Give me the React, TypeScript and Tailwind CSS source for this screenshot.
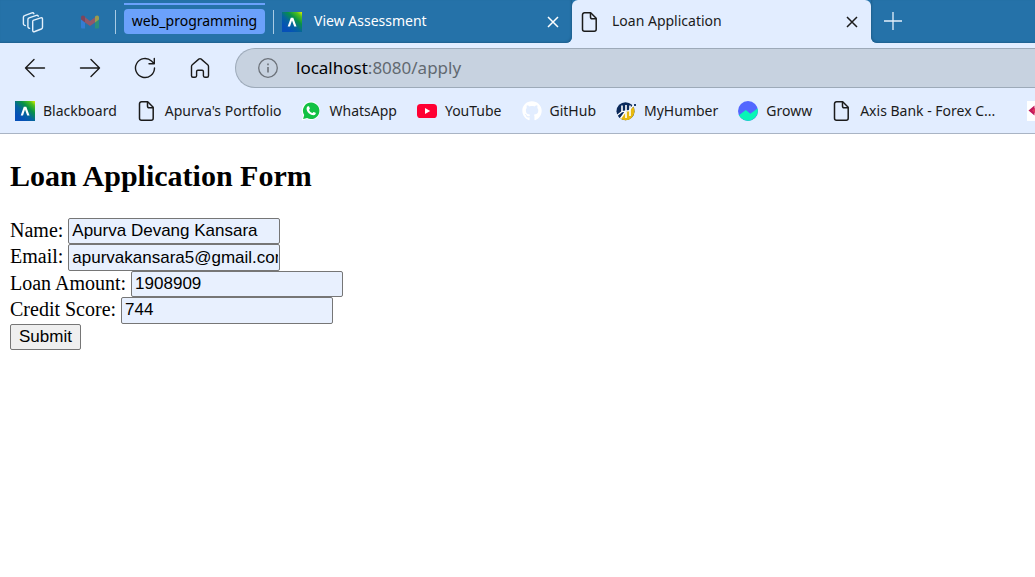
import React from 'react';
import { FaGithub } from 'react-icons/fa';

function PageIcon() {
  return (
    <svg viewBox="0 0 20 20" className="size-5 shrink-0" fill="none" stroke="#1b1b1b" strokeWidth="1.5" aria-hidden="true">
      <path d="M4.500 .8h6.200L16.200 6.300v10.900a2 2 0 0 1-2 2H4.500a2 2 0 0 1-2-2V2.800a2 2 0 0 1 2-2Z" strokeLinejoin="round" />
      <path d="M10.500 1v4.300a1.500 1.500 0 0 0 1.500 1.500h4" />
    </svg>
  );
}

function BlackboardIcon({ id }: { id: string }) {
  return (
    <svg viewBox="0 0 20 20" className="size-5 shrink-0" aria-hidden="true">
      <defs>
        <linearGradient id={id} x1="1" y1="0" x2="0.25" y2="0.85">
          <stop offset="0" stopColor="#e6f000" />
          <stop offset="0.18" stopColor="#4fc01c" />
          <stop offset="0.42" stopColor="#089147" />
          <stop offset="0.7" stopColor="#0563a0" />
          <stop offset="1" stopColor="#0650b8" />
        </linearGradient>
      </defs>
      <path d="M0 0h20v20H0z" fill={`url(#${id})`} />
      <path d="M8.8 5.7h2.500l3.200 8.700h-2.300L10 8.400l-2 6H5.700Z" fill="#fff" />
    </svg>
  );
}

function WhatsAppIcon() {
  return (
    <svg viewBox="0 0 20 20" className="size-5 shrink-0" aria-hidden="true">
      <path d="M10.2.4a9.3 9.3 0 1 1-4.4 17.7L.7 19.4l1.4-4.9A9.3 9.3 0 0 1 10.2.4Z" fill="#fff" />
      <path d="M10.2 1.6a8.2 8.2 0 1 1-4.1 15.300l-4 1.100 1.100-3.900a8.200 8.200 0 0 1 7-12.500Z" fill="#12c143" />
      <path d="M7 5.3c.4-.2.9-.1 1.1.3l.8 1.9c.1.4-.7 1.1-.8 1.4.6 1.5 1.7 2.500 3.200 3.100.4 0 .9-1 1.300-1.100l2 .9c.5.3-.1 1.700-.6 2-2.600 1.500-8.800-2-8.400-6.400.1-.9.700-1.800 1.400-2.100Z" fill="#fff" />
    </svg>
  );
}

function YouTubeIcon() {
  return (
    <svg viewBox="0 0 20 20" className="size-5 shrink-0" aria-hidden="true">
      <rect y="3" width="20" height="14" rx="3.6" fill="#ff0033" />
      <path d="m8 7 5.200 3L8 13Z" fill="#fff" />
    </svg>
  );
}

function HumberIcon() {
  return (
    <svg viewBox="0 0 20 20" className="size-5 shrink-0" aria-hidden="true">
      <circle cx="9.500" cy="10.200" r="9" fill="#0b2a5c" />
      <path d="M17.200 5.500A9 9 0 0 1 4 17.300L8.500 11.500 14 9Z" fill="#e8b90d" />
      <path d="M6 4.500v6.500M10 4v6M14 4.500V15M10 10.500V17" stroke="#fff" strokeWidth="1.600" fill="none" />
      <path d="M1 14.500 6 10.500l7-.800 4.500-5.500M4.500 17.500l5-7" stroke="#fff" strokeWidth="1.300" fill="none" />
      <path d="M18 3h2v2h-2z" fill="#173a6c" />
    </svg>
  );
}

function GrowwIcon() {
  return (
    <svg viewBox="0 0 20 20" className="size-5 shrink-0" aria-hidden="true">
      <circle cx="10" cy="10" r="10" fill="#5367ff" />
      <path d="M.9 14.200 7.800 8.900l4.500 3.800 7.300-5.200A10 10 0 0 1 .9 14.200Z" fill="#08f6b6" />
    </svg>
  );
}

function AxisIcon() {
  return (
    <svg viewBox="0 0 20 20" className="size-5 shrink-0" aria-hidden="true">
      <path d="M0 0h20v20H0z" fill="#fff" />
      <path d="m1.500 9.500 6-5v10Z" fill="#c2185b" />
      <path d="m5 9.500 6-6v12Z" fill="#e0335f" />
    </svg>
  );
}

function WorkspacesIcon() {
  return (
    <svg viewBox="0 0 22 22" className="size-[22px]" fill="none" stroke="#e4f0fb" strokeWidth="1.400" strokeLinejoin="round" strokeLinecap="round" aria-hidden="true">
      <path d="m11.200 9.300 7.500-2.500q1.800-.5 1.800 1.200v8.300q0 1.200-1.200 1.700l-6.500 2.500q-2.100.7-2.100-1.200V10.500q0-1 .5-1.200Z" />
      <path d="m7.600 17.300-.9-.300q-.8-.4-.8-1.400V8.600q0-1.300 1.200-1.700l7.200-2.500q1.600-.5 2 .8" />
      <path d="m3.300 14.600-1-.4q-.9-.4-.9-1.500V6.300q0-1.300 1.200-1.700l7.300-2.700q1.500-.4 2 .8" />
    </svg>
  );
}

function GmailIcon() {
  return (
    <svg viewBox="0 0 20 20" className="size-5 opacity-55" aria-hidden="true">
      <path d="M1 5v10.500a1 1 0 0 0 1 1h3V8Z" fill="#4285f4" />
      <path d="M19 5v10.500a1 1 0 0 1-1 1h-3V8Z" fill="#34a853" />
      <path d="M5 5.200 10 9l5-3.800v5.200L10 14l-5-3.600Z" fill="#ea4335" />
      <path d="M1 5.500C1 3.500 3 2.800 5 4.500v5.900L1 7.500Z" fill="#c5221f" />
      <path d="M19 5.500c0-2-2-2.700-4-1v5.900l4-2.900Z" fill="#fbbc04" />
    </svg>
  );
}

function CloseIcon() {
  return (
    <svg viewBox="0 0 12 12" className="size-3" stroke="currentColor" strokeWidth="1.500" aria-hidden="true">
      <path d="m1 1 10 10M11 1 1 11" />
    </svg>
  );
}

const stroke = {
  fill: 'none',
  stroke: '#1b1b1b',
  strokeWidth: 1.4,
  strokeLinecap: 'round' as const,
  strokeLinejoin: 'round' as const,
};

function NavButton({ label, children }: { label: string; children: React.ReactNode }) {
  return (
    <button type="button" aria-label={label} className="flex size-[22px] items-center justify-center">
      <svg viewBox="0 0 22 22" className="size-[22px]" {...stroke}>{children}</svg>
    </button>
  );
}

const bookmarks = [
  { name: 'Blackboard', icon: <BlackboardIcon id="bb-bookmark" /> },
  { name: "Apurva's Portfolio", icon: <PageIcon /> },
  { name: 'WhatsApp', icon: <WhatsAppIcon /> },
  { name: 'YouTube', icon: <YouTubeIcon /> },
  { name: 'GitHub', icon: <FaGithub className="size-5 shrink-0 text-white" /> },
  { name: 'MyHumber', icon: <HumberIcon /> },
  { name: 'Groww', icon: <GrowwIcon /> },
  { name: 'Axis Bank - Forex C...', icon: <PageIcon /> },
];

const fields = [
  { id: 'name', label: 'Name:', value: 'Apurva Devang Kansara' },
  { id: 'email', label: 'Email:', value: 'apurvakansara5@gmail.com' },
  { id: 'amount', label: 'Loan Amount:', value: '1908909' },
  { id: 'score', label: 'Credit Score:', value: '744' },
];

function TabStrip() {
  return (
    <div className="flex h-[43px] bg-[#e2edff] text-sm">
      <div className="flex w-[572px] shrink-0 items-center rounded-br-md bg-[#2572a9] pl-[22px] shadow-[inset_-1px_-1px_2px_#1f608f]">
        <button type="button" aria-label="Workspaces"><WorkspacesIcon /></button>
        <button type="button" aria-label="Gmail" className="ml-9"><GmailIcon /></button>
        <span className="ml-[15px] h-6 w-px bg-[#a9cbe4]" />
        <div className="ml-2 flex h-[43px] w-[141px] flex-col pt-[3px]">
          <span className="h-0.5 bg-[#6ba1fb]" />
          <button type="button" className="mt-1 flex h-[25px] items-start justify-center rounded bg-[#6ba1fb] leading-[23px] text-black">web_programming</button>
        </div>
        <span className="ml-2 h-6 w-px bg-[#a9cbe4]" />
        <div className="ml-2 flex flex-1 items-center gap-3 pr-[13px] text-white">
          <BlackboardIcon id="bb-tab" />
          <span className="flex-1 pb-0.5">View Assessment</span>
          <button type="button" aria-label="Close View Assessment"><CloseIcon /></button>
        </div>
      </div>
      <div className="w-[299px] shrink-0 bg-[linear-gradient(#2572a9_50%,#e2edff_50%)]">
        <div className="flex h-full items-center gap-3 rounded-t-md bg-[#e2edff] pr-[13px] pl-2 text-[#1b1b1b]">
          <PageIcon />
          <span className="flex-1 pb-0.5">Loan Application</span>
          <button type="button" aria-label="Close Loan Application"><CloseIcon /></button>
        </div>
      </div>
      <div className="flex flex-1 items-center rounded-bl-md bg-[#2572a9] pb-0.5 pl-[13px] shadow-[inset_1px_-1px_2px_#1f608f]">
        <button type="button" aria-label="New tab">
          <svg viewBox="0 0 18 18" className="size-[18px]" stroke="#e4f0fb" strokeWidth="1.300"><path d="M9 0v18M0 9h18" /></svg>
        </button>
      </div>
    </div>
  );
}

function Toolbar() {
  return (
    <div className="flex items-center bg-[#e2edff] pt-[5px] pl-6">
      <div className="flex shrink-0 gap-[33px]">
        <NavButton label="Back"><path d="M10 2.500 1.500 11l8.500 8.500M1.500 11H20.500" /></NavButton>
        <NavButton label="Forward"><path d="m12 2.500 8.500 8.500-8.500 8.500M20.500 11H1.500" /></NavButton>
        <NavButton label="Refresh"><path d="M20.500 11A9.500 9.500 0 1 1 17.500 4.100L20 6.500M20.300 1.500v5.300h-5.300" /></NavButton>
        <NavButton label="Home"><path d="M2.500 9.500q0-1 .8-1.700l6.500-5.700q1.200-1 2.400 0l6.500 5.700q.8.700.8 1.700v9.200q0 1.500-1.500 1.500h-2.200q-1.400 0-1.400-1.400v-4.300q0-1.300-1.300-1.300H8.900q-1.300 0-1.300 1.300v4.300q0 1.400-1.400 1.400H4q-1.500 0-1.500-1.500Z" /></NavButton>
      </div>
      <div className="ml-6 flex h-10 min-w-0 flex-1 items-center gap-[18px] rounded-l-full border border-r-0 border-[#9daab9] bg-[#c7d2e0] pl-[22px]">
        <svg viewBox="0 0 20 20" className="size-5 shrink-0" fill="none" stroke="#6c727a" strokeWidth="1.300" aria-hidden="true">
          <circle cx="10" cy="10" r="9.300" />
          <path d="M10 9v5.500M10 5.500v1.700" strokeWidth="1.600" />
        </svg>
        <a href="#apply" className="text-[17px] leading-6 text-[#626970]"><span className="text-black">localhost</span>:8080/apply</a>
      </div>
    </div>
  );
}

export default function App() {
  return (
    <div className="min-h-screen overflow-hidden bg-white">
      <header className="font-['Noto_Sans',sans-serif]">
        <TabStrip />
        <Toolbar />
        <nav aria-label="Bookmarks" className="flex h-[46px] gap-5 overflow-hidden border-b border-[#a9b4c4] bg-[#e2edff] pl-[15px] text-sm text-[#1b1b1b]">
          {bookmarks.map((b) => (
            <a key={b.name} href="#bookmark" className="flex shrink-0 items-center gap-2 whitespace-nowrap">
              {b.icon}
              <span>{b.name}</span>
            </a>
          ))}
          <a href="#bookmark" aria-label="Axis Bank" className="ml-3 flex shrink-0 items-center"><AxisIcon /></a>
        </nav>
      </header>
      <main className="px-2.5 pt-[25px] font-['Liberation_Serif',serif] text-black">
        <h1 className="text-[30px] leading-[34px] font-bold">Loan Application Form</h1>
        <form className="mt-[25px] grid h-[132px] grid-rows-5 text-xl leading-6" onSubmit={(e) => e.preventDefault()}>
          {fields.map((f) => (
            <div key={f.id} className="flex gap-[5px]">
              <label htmlFor={f.id}>{f.label}</label>
              <input
                id={f.id}
                type="text"
                defaultValue={f.value}
                className="w-[212px] rounded-xs border border-[#767676] bg-[#e8f0fe] pr-px pl-[3px] font-['Liberation_Sans',sans-serif] text-[17px] leading-5 outline-none"
              />
            </div>
          ))}
          <div className="flex">
            <button type="submit" className="rounded-xs border border-[#767676] bg-[#efefef] px-2 font-['Liberation_Sans',sans-serif] text-[17px] leading-5">Submit</button>
          </div>
        </form>
      </main>
    </div>
  );
}
